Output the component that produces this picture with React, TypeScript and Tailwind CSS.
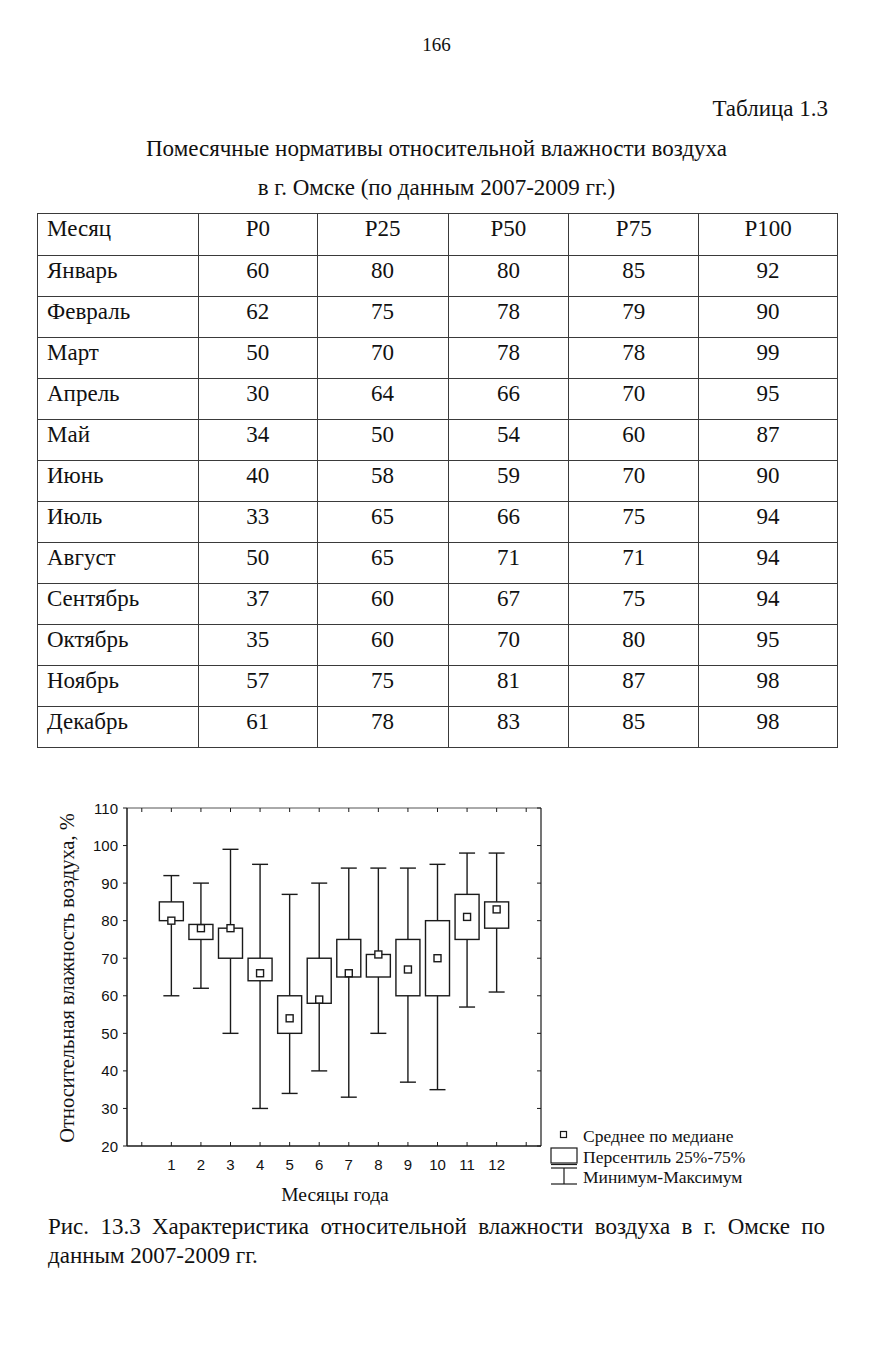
import React from 'react';

const rows: [string, number, number, number, number, number][] = [
  ['Январь', 60, 80, 80, 85, 92],
  ['Февраль', 62, 75, 78, 79, 90],
  ['Март', 50, 70, 78, 78, 99],
  ['Апрель', 30, 64, 66, 70, 95],
  ['Май', 34, 50, 54, 60, 87],
  ['Июнь', 40, 58, 59, 70, 90],
  ['Июль', 33, 65, 66, 75, 94],
  ['Август', 50, 65, 71, 71, 94],
  ['Сентябрь', 37, 60, 67, 75, 94],
  ['Октябрь', 35, 60, 70, 80, 95],
  ['Ноябрь', 57, 75, 81, 87, 98],
  ['Декабрь', 61, 78, 83, 85, 98],
];

const SERIF = '"Liberation Serif", "Times New Roman", serif';
const SANS = '"Liberation Sans", Arial, sans-serif';

// plot frame in page coordinates
const L = 127;
const R = 541;
const T = 808;
const B = 1146;
const yv = (v: number) => T + ((110 - v) * (B - T)) / 90;
const xk = (k: number) => L + ((k + 0.5) * (R - L)) / 14;

function BoxChart() {
  const stroke = '#1a1a1a';
  return (
    <svg width={740} height={420} viewBox="40 790 740 420" className="block">
      {/* frame */}
      <line x1={L} y1={T} x2={R} y2={T} stroke="#555" strokeWidth={1} />
      <line x1={R} y1={T} x2={R} y2={B} stroke={stroke} strokeWidth={1.2} />
      <line x1={L} y1={T} x2={L} y2={B} stroke={stroke} strokeWidth={1.5} />
      <line x1={L} y1={B} x2={R} y2={B} stroke={stroke} strokeWidth={1.5} />

      {/* y ticks + labels */}
      {[110, 100, 90, 80, 70, 60, 50, 40, 30, 20].map((v) => (
        <g key={v}>
          <line x1={L - 4} y1={yv(v)} x2={L} y2={yv(v)} stroke={stroke} strokeWidth={1} />
          <line x1={R - 4} y1={yv(v)} x2={R} y2={yv(v)} stroke={stroke} strokeWidth={1} />
          <text
            x={118}
            y={yv(v) + 5.5}
            textAnchor="end"
            fontFamily={SANS}
            fontSize={15}
            fill="#111"
          >
            {v}
          </text>
        </g>
      ))}

      {/* x ticks */}
      {Array.from({ length: 14 }, (_, k) => (
        <g key={k}>
          <line x1={xk(k)} y1={B - 4} x2={xk(k)} y2={B} stroke={stroke} strokeWidth={1} />
          <line x1={xk(k)} y1={T} x2={xk(k)} y2={T + 4} stroke={stroke} strokeWidth={1} />
        </g>
      ))}
      {rows.map((_, i) => (
        <text
          key={i}
          x={xk(i + 1)}
          y={1170}
          textAnchor="middle"
          fontFamily={SANS}
          fontSize={15}
          fill="#111"
        >
          {i + 1}
        </text>
      ))}

      {/* boxes */}
      {rows.map(([name, p0, p25, p50, p75, p100], i) => {
        const cx = xk(i + 1);
        return (
          <g key={name} stroke={stroke} strokeWidth={1.4} fill="white">
            <line x1={cx} y1={yv(p100)} x2={cx} y2={yv(p0)} />
            <line x1={cx - 8} y1={yv(p100)} x2={cx + 8} y2={yv(p100)} />
            <line x1={cx - 8} y1={yv(p0)} x2={cx + 8} y2={yv(p0)} />
            <rect x={cx - 12} y={yv(p75)} width={24} height={yv(p25) - yv(p75)} />
            <rect x={cx - 3.5} y={yv(p50) - 3.5} width={7} height={7} />
          </g>
        );
      })}

      {/* axis titles */}
      <text
        transform="translate(74 978) rotate(-90)"
        textAnchor="middle"
        fontFamily={SERIF}
        fontSize={20.5}
        fill="#111"
      >
        Относительная влажность воздуха, %
      </text>
      <text x={335} y={1201} textAnchor="middle" fontFamily={SERIF} fontSize={19.5} fill="#111">
        Месяцы года
      </text>

      {/* legend */}
      <g stroke={stroke} strokeWidth={1.2} fill="white">
        <rect x={560.5} y={1131.5} width={6} height={6} />
        <rect x={551} y={1148} width={26} height={15} />
        <line x1={551} y1={1164.5} x2={577} y2={1164.5} />
        <line x1={551} y1={1168} x2={577} y2={1168} />
        <line x1={564} y1={1168} x2={564} y2={1184} />
        <line x1={551} y1={1184} x2={577} y2={1184} />
      </g>
      <g fontFamily={SERIF} fontSize={17.5} fill="#111">
        <text x={583} y={1142}>Среднее по медиане</text>
        <text x={583} y={1163}>Персентиль 25%-75%</text>
        <text x={583} y={1183}>Минимум-Максимум</text>
      </g>
    </svg>
  );
}

export default function App() {
  return (
    <div
      className="w-[873px] min-h-[1350px] bg-white text-[#111]"
      style={{ fontFamily: SERIF }}
    >
      <div className="pt-[33px] text-center text-[19px] leading-[24px]">166</div>

      <div className="mt-[39px] pr-[45px] text-right text-[23px] leading-[26px]">Таблица 1.3</div>

      <div className="mt-[7px] text-center text-[23px] leading-[39px]">
        <div>Помесячные нормативы относительной влажности воздуха</div>
        <div>в г. Омске (по данным 2007-2009 гг.)</div>
      </div>

      <table className="ml-[37px] mt-[6px] w-[801px] border-collapse text-[23px] leading-[26px]">
        <colgroup>
          <col className="w-[161px]" />
          <col className="w-[119px]" />
          <col className="w-[131px]" />
          <col className="w-[121px]" />
          <col className="w-[130px]" />
          <col className="w-[139px]" />
        </colgroup>
        <thead>
          <tr className="h-[42px]">
            <th className="border border-[#3a3a3a] px-[9px] pt-[2px] align-top text-left font-normal">Месяц</th>
            <th className="border border-[#3a3a3a] pt-[2px] align-top font-normal">P0</th>
            <th className="border border-[#3a3a3a] pt-[2px] align-top font-normal">P25</th>
            <th className="border border-[#3a3a3a] pt-[2px] align-top font-normal">P50</th>
            <th className="border border-[#3a3a3a] pt-[2px] align-top font-normal">P75</th>
            <th className="border border-[#3a3a3a] pt-[2px] align-top font-normal">P100</th>
          </tr>
        </thead>
        <tbody>
          {rows.map(([name, ...vals]) => (
            <tr key={name} className="h-[41px]">
              <td className="border border-[#3a3a3a] px-[9px] pt-[2px] align-top">{name}</td>
              {vals.map((v, j) => (
                <td key={j} className="border border-[#3a3a3a] pt-[2px] align-top text-center">
                  {v}
                </td>
              ))}
            </tr>
          ))}
        </tbody>
      </table>

      <div className="mt-[42px] ml-[40px]">
        <BoxChart />
      </div>

      <p className="mx-[48px] mt-[2px] text-justify text-[23px] leading-[29px]">
        Рис. 13.3 Характеристика относительной влажности воздуха в г. Омске по данным
        2007-2009 гг.
      </p>
    </div>
  );
}
